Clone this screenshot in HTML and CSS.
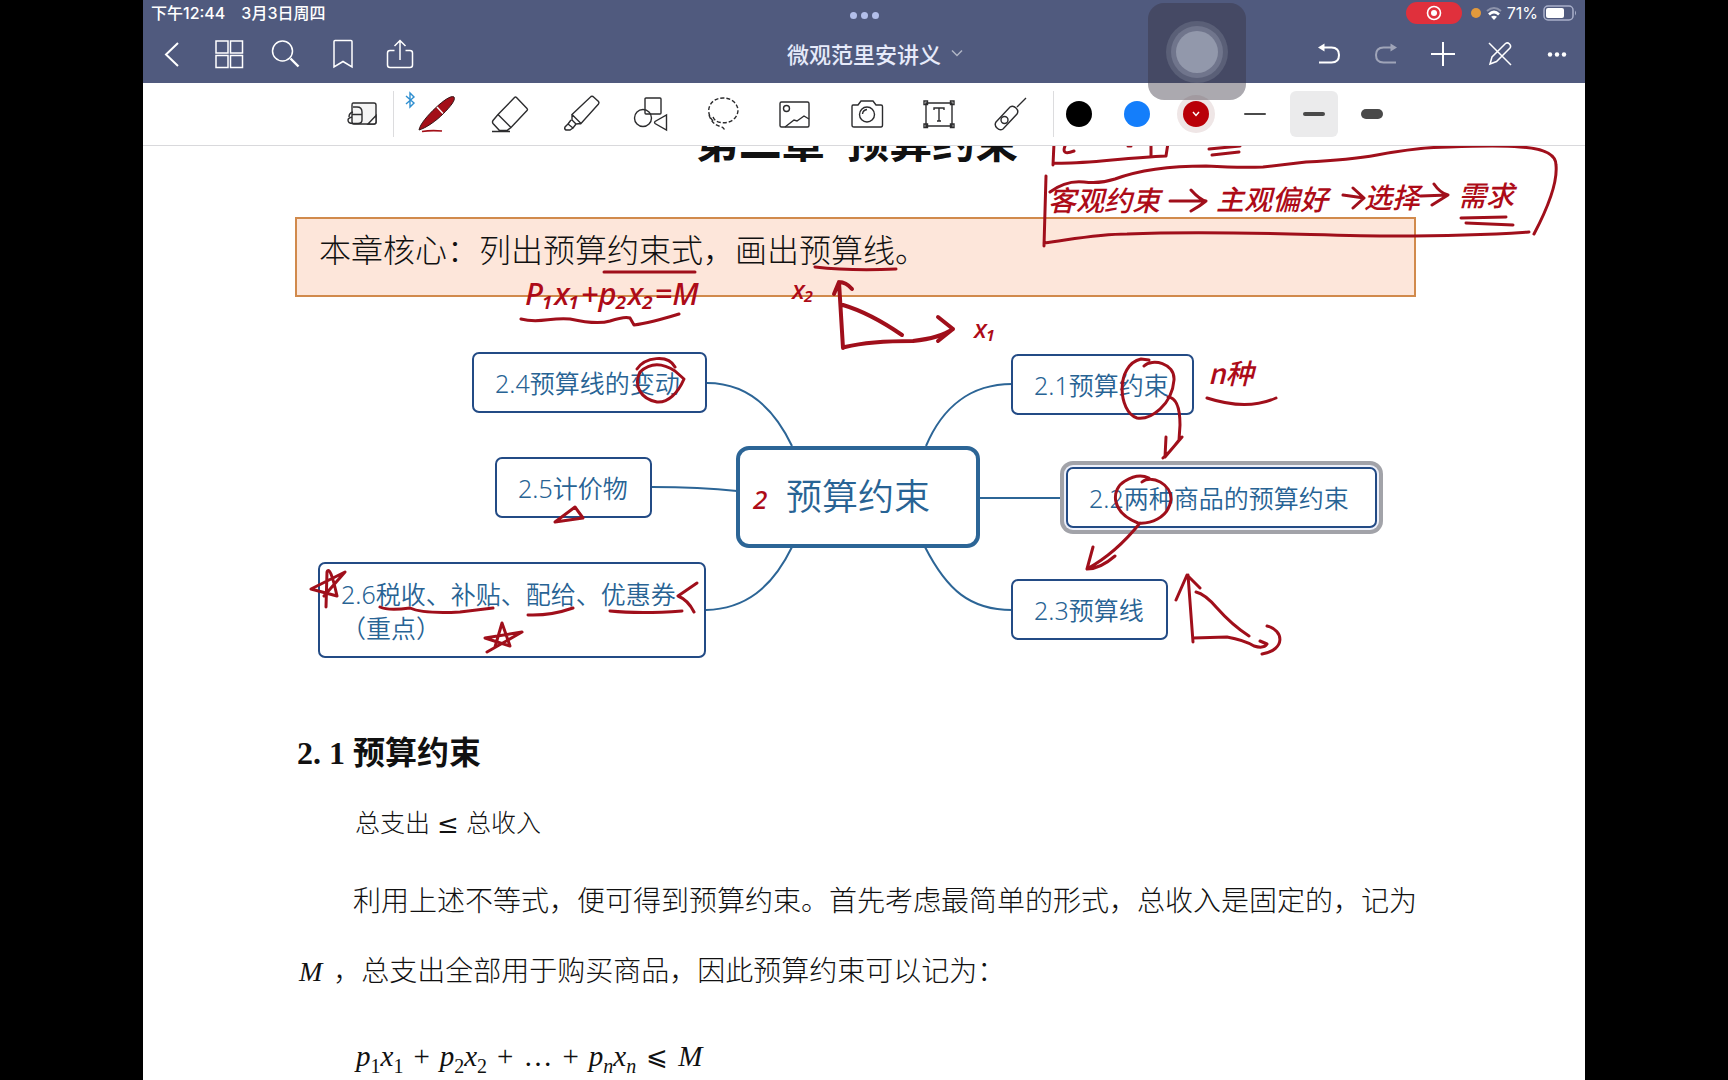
FILE: index.html
```html
<!DOCTYPE html>
<html lang="zh-CN">
<head>
<meta charset="utf-8">
<meta name="viewport" content="width=device-width, initial-scale=1">
<title>微观范里安讲义</title>
<link rel="stylesheet" href="styles.css">
</head>
<body>
<div class="app">
  <header class="header">
    <div class="status">
      <div class="status-left"><span>下午12:44</span><span>3月3日周四</span></div>
      <div class="multitask"><i></i><i></i><i></i></div>
      <div class="status-right">
        <span class="record"><svg width="16" height="16" viewBox="0 0 16 16"><circle cx="8" cy="8" r="6.5" fill="none" stroke="#fff" stroke-width="1.6"/><circle cx="8" cy="8" r="3" fill="#fff"/></svg></span>
        <span class="mic-dot"></span>
        <svg width="16" height="14" viewBox="0 0 16 14" fill="none" stroke="#fff" stroke-width="2"><path d="M1 5Q8-1 15 5" opacity=".35"/><path d="M3 8.500Q8 3.500 13 8.500" stroke-width="2.600"/><path d="M8 14L5 10.800Q8 8.700 11 10.800Z" fill="#fff" stroke="none"/></svg>
        <span>71%</span>
        <svg width="34" height="16" viewBox="0 0 34 16"><rect x="1" y="1" width="29" height="14" rx="4" fill="none" stroke="#a9b0ca" stroke-width="1.5"/><rect x="3" y="3" width="18" height="10" rx="2" fill="#fff"/><path d="M32 5.500Q34 8 32 10.500Z" fill="#a9b0ca"/></svg>
      </div>
    </div>
    <nav class="nav">
      <div class="nav-group">
        <button aria-label="返回"><svg width="30" height="30" viewBox="0 0 30 30"><path d="M21 4L9 15.500L21 27" stroke-width="2"/></svg></button>
        <button aria-label="缩略图"><svg width="30" height="30" viewBox="0 0 30 30"><path d="M2 2h12v12H2zM16.500 2h12v12h-12zM2 16.500h12v12H2zM16.500 16.500h12v12h-12z"/></svg></button>
        <button aria-label="搜索"><svg width="30" height="30" viewBox="0 0 30 30"><circle cx="11.500" cy="12" r="10"/><path d="M19.500 19.500l8 8" stroke-width="2.400"/></svg></button>
        <button aria-label="书签"><svg width="30" height="30" viewBox="0 0 30 30"><path d="M6 2.500Q6 1.500 7 1.500H23Q24 1.500 24 2.500V28L15 22.500L6 28Z"/></svg></button>
        <button aria-label="分享"><svg width="30" height="30" viewBox="0 0 30 30"><path d="M9.500 11.500H5Q2.500 11.500 2.500 14V26Q2.500 28.500 5 28.500H25Q27.500 28.500 27.500 26V14Q27.500 11.500 25 11.500H20.500M15 21V2M9.500 7L15 1.500L20.500 7"/></svg></button>
      </div>
      <button class="doc-title">微观范里安讲义<svg width="12" height="8" viewBox="0 0 12 8"><path d="M1 1.500L6 6.500L11 1.500" opacity=".55"/></svg></button>
      <div class="nav-group nav-right">
        <button aria-label="撤销"><svg width="26" height="26" viewBox="0 0 26 26"><path d="M6 6.500H15.500Q23 6.500 23 14Q23 21.500 15.500 21.500H3" stroke-width="2"/><path d="M2 6.500L8.500 2.500V10.500Z" fill="#fff" stroke="none"/></svg></button>
        <button aria-label="重做" disabled><svg width="26" height="26" viewBox="0 0 26 26"><path d="M20 6.500H10.500Q3 6.500 3 14Q3 21.500 10.500 21.500H23" stroke-width="2"/><path d="M24 6.500L17.500 2.500V10.500Z" fill="#fff" stroke="none"/></svg></button>
        <button aria-label="添加"><svg width="26" height="26" viewBox="0 0 26 26"><path d="M13 1V25M1 13H25" stroke-width="2"/></svg></button>
        <button aria-label="只读模式"><svg width="26" height="26" viewBox="0 0 26 26"><path d="M2 2L24 24M3 23L5 16L18.500 2.500Q20.500 1 22.500 3Q24.500 5 23 7L9.500 20.500Z"/></svg></button>
        <button aria-label="更多"><svg width="26" height="26" viewBox="0 0 26 26"><g fill="#fff" stroke="none"><circle cx="6" cy="13.500" r="2.200"/><circle cx="13" cy="13.500" r="2.200"/><circle cx="20" cy="13.500" r="2.200"/></g></svg></button>
      </div>
    </nav>
  </header>

  <div class="toolbar" role="toolbar">
    <div class="tools">
      <button aria-label="放大窗口"><svg width="36" height="36" viewBox="0 0 36 36"><path d="M8 7H29Q31 7 31 9V26Q31 28 29 28H9Q7 28 7 26V9Q7 7 8 7Z" fill="#f4f4f4"/><path d="M23 28L31 19.500V26Q31 28 29 28Z" fill="#fff"/><path d="M8 11H12Q17 11 17 16V24Q17 27.500 13 27.500H8Q3 27.500 3 24Q3 22 7 21M7 18.500H17M8 16Q4 17 4 21"/></svg></button>
      <button aria-label="钢笔" class="pen"><svg class="bt" width="12" height="18" viewBox="0 0 12 18"><path d="M2 5L10 12L6 16V2L10 6L2 13"/></svg><svg width="44" height="40" viewBox="0 0 44 40"><path d="M4 36C5 30 13 21 21 13.500C28 7 36 1 39 3C41 6 35 13 28 20C21 27 11 34 4 36Z" fill="#a30f18" stroke="#35181a" stroke-width="1"/><path d="M22 13L28 19.500" stroke="#fff"/><path d="M7 37.500Q16 36 27 37" stroke="#a30f18" stroke-width="1.600"/></svg></button>
      <button class="nudged" aria-label="橡皮擦"><svg width="40" height="40" viewBox="0 0 40 40"><path d="M26.500 3.500L37 14.500Q38 15.500 37 16.500L21 33.500L8 20.500L24.500 3.500Q25.500 2.500 26.500 3.500ZM8 20.500L3 26.500Q2 28 3 29.500L9.500 36.500L17 36.500L21 33.500M2 37.500H20"/></svg></button>
      <button class="nudged" aria-label="荧光笔"><svg width="40" height="40" viewBox="0 0 40 40"><path d="M31 2.500L36.500 7.500Q37.500 9 36.500 10L19 29.500L10 20.500L29 2.500Q30 2 31 2.500ZM10 20.500L10 26L14 30L19 29.500M9 26L6 30L11 34L14 30M6 30L3 33Q2 35 4 36L8 36L11 34"/></svg></button>
      <button aria-label="形状"><svg width="36" height="36" viewBox="0 0 36 36"><rect x="12" y="2" width="16" height="16" rx="1"/><circle cx="10" cy="22" r="8.500"/><path d="M33.500 19V34L22 27.500Q21 26.500 22 25.500Z"/></svg></button>
      <button aria-label="套索"><svg width="36" height="36" viewBox="0 0 36 36"><path d="M8 25C-1 15 5 2 18 2C31 2 37 14 30 22C23 30 8 27 8 20M4 19Q7 28 14 30Q19 31 20 35" stroke-dasharray="4 2"/></svg></button>
      <button aria-label="图片"><svg width="36" height="36" viewBox="0 0 36 36"><rect x="3" y="6" width="29" height="25" rx="1.500"/><circle cx="9.500" cy="12.500" r="3"/><path d="M8 31L17 24L20 25L27 20L32 23"/></svg></button>
      <button aria-label="相机"><svg width="36" height="36" viewBox="0 0 36 36"><path d="M4 9H9L12 5H24L27 9H32Q33.500 9 33.500 10.500V29Q33.500 31 32 31H5Q3 31 3 29V10.500Q3 9 4 9Z"/><circle cx="18" cy="18.500" r="7.500"/><path d="M13.500 18Q14 14 18 13.500"/></svg></button>
      <button aria-label="文本"><svg width="36" height="36" viewBox="0 0 36 36"><path d="M5 7H31V30H5ZM3 5h3.500v3.500H3zM29.500 5H33v3.500h-3.500zM3 28h3.500v3.500H3zM29.500 28H33v3.500h-3.500zM13 14V12H23V14M18 12V25M16 25h4"/></svg></button>
      <button aria-label="激光笔"><svg width="36" height="36" viewBox="0 0 36 36"><path d="M3 26L17 11Q20 9 23 12Q26 15 24 18L10 33Q7 35 4 32Q1 29 3 26ZM24 11L33 2"/><circle cx="11.500" cy="24" r="3.500"/></svg></button>
    </div>
    <div class="presets">
      <button aria-label="黑色"><span class="dot black"></span></button>
      <button aria-label="蓝色"><span class="dot blue"></span></button>
      <button aria-label="红色"><span class="dot red"><svg width="8" height="6" viewBox="0 0 8 6"><path d="M1 1L4 4.500L7 1" stroke="#fff"/></svg></span></button>
      <button aria-label="细"><span class="line thin"></span></button>
      <button aria-label="中" class="selected"><span class="line mid"></span></button>
      <button aria-label="粗"><span class="line thick"></span></button>
    </div>
  </div>

  <main class="document">
    <h1 class="chapter">第二章&nbsp; 预算约束</h1>
    <p class="core">本章核心：列出预算约束式，画出预算线。</p>

    <section class="mindmap">
      <svg class="links" width="1120" height="380" viewBox="295 297 1120 380">
        <path d="M707 383C745 383 773 406 792 446M652 487Q700 487 737 491M706 610C745 609 772 588 792 547M926 446C942 408 970 384 1012 384M979 498H1060M925 547C947 590 970 610 1012 610"/>
      </svg>
      <div class="node root">预算约束</div>
      <div class="node n24">2.4预算线的变动</div>
      <div class="node n25">2.5计价物</div>
      <div class="node n26">2.6税收、补贴、配给、优惠券<br>（重点）</div>
      <div class="node n21">2.1预算约束</div>
      <div class="node n22">2.2两种商品的预算约束</div>
      <div class="node n23">2.3预算线</div>
    </section>

    <h2 class="section-title">2. 1 预算约束</h2>
    <p class="inequality"><span>总支出</span><span class="leq">≤</span><span>总收入</span></p>
    <p class="body-text">利用上述不等式，便可得到预算约束。首先考虑最简单的形式，总收入是固定的，记为 <i>M</i> ，总支出全部用于购买商品，因此预算约束可以记为：</p>
    <p class="formula"><span><i>p</i><sub>1</sub><i>x</i><sub>1</sub></span><span>+</span><span><i>p</i><sub>2</sub><i>x</i><sub>2</sub></span><span>+</span><span>…</span><span>+</span><span><i>p</i><sub><i>n</i></sub><i>x</i><sub><i>n</i></sub></span><span class="leq">⩽</span><i>M</i></p>

    <svg class="ink" width="1442" height="934" viewBox="143 146 1442 934">
      <g class="strokes">
        <path d="M1054 143L1053 165M1053 163C1080 165 1120 158 1166 156L1168 143M1151 143V156M1065 146Q1061 156 1074 151M1128 146L1131 146M1209 149L1240 146M1212 155L1239 152"/>
        <path d="M1046 176L1044 246M1044 243C1080 238 1100 234 1127 234C1230 230 1320 236 1395 236Q1470 236 1529 232M1050 192Q1066 180 1084 182Q1100 184 1115 179Q1150 166 1206 166Q1240 168 1263 167L1306 162Q1350 160 1377 155Q1420 147 1449 147Q1500 145 1520 147Q1556 149 1556 165C1558 185 1544 215 1534 234"/>
        <path d="M1170 201H1206M1191 190Q1200 200 1206 201Q1200 206 1191 211M1343 195L1364 198M1353 188L1364 198L1353 208M1421 196L1448 195M1434 184Q1440 193 1448 195Q1440 200 1432 205M1461 218L1506 217M1466 223L1513 225"/>
        <path d="M604 272H695M815 267Q850 271 896 269M521 319C540 324 550 317 570 319Q597 325 610 321Q625 316 630 318L634 325Q650 323 679 314"/>
        <path d="M839 282L843 348M834 294L839 282Q846 282 852 289M843 305Q870 313 902 335M845 347Q870 341 913 341Q940 338 953 329M938 317L953 329L938 341" stroke-width="4"/>
        <path d="M637 369C645 357 668 354 675 367M640 372Q655 358 675 371L684 379C678 393 668 403 657 402C641 399 633 386 640 372M555 522L575 507L583 518Z"/>
        <path d="M326 607L327 572Q330 564 337 596L311 589L345 572L324 596M487 652L522 632L485 638L510 646L502 623L495 647M380 607Q388 611 410 608Q423 614 460 612L493 608M528 615Q550 616 573 608M610 611Q640 614 682 611M697 583L678 596Q688 600 694 612"/>
        <path d="M1144 366C1152 358 1175 363 1174 380C1172 405 1151 420 1137 418C1118 412 1115 365 1141 359L1149 360M1168 397Q1180 398 1180 425L1179 440Q1172 450 1163 458M1166 437L1165 457L1182 437M1207 398Q1247 411 1276 398"/>
        <path d="M1142 482C1151 474 1172 484 1171 500C1168 519 1149 524 1138 523C1110 512 1111 489 1125 481Q1138 473 1149 478M1140 523Q1116 553 1087 569M1093 547L1087 569Q1100 569 1115 556"/>
        <path d="M1188 575L1193 642M1176 600L1187 575L1200 588M1196 592Q1205 594 1217 608Q1232 625 1249 636M1193 638L1227 637Q1244 640 1254 646Q1264 649 1267 644L1260 641M1267 626C1284 630 1286 650 1262 654"/>
      </g>
      <g class="handwriting">
        <text x="1048" y="211">客观约束</text>
        <text x="1216" y="210">主观偏好</text>
        <text x="1364" y="208">选择</text>
        <text x="1458" y="206">需求</text>
        <text class="latin wide" x="525" y="305">P₁x₁+p₂x₂=M</text>
        <text class="latin" x="792" y="299">x₂</text>
        <text class="latin" x="974" y="338">x₁</text>
        <text class="latin" x="753" y="509">2</text>
        <text x="1208" y="384">n种</text>
      </g>
    </svg>
  </main>

  <button class="assistive" aria-label="辅助触控"><span></span></button>
</div>
</body>
</html>
```
FILE: styles.css
```css
* { box-sizing: border-box; }

body {
  margin: 0;
  background: #000;
  color: #111;
  font-family: "Inter", "Noto Sans CJK SC", sans-serif;
}

button {
  padding: 0;
  border: 0;
  background: none;
  color: inherit;
  font: inherit;
}

svg { fill: none; }

.app {
  position: relative;
  max-width: 1442px;
  min-height: 100vh;
  margin: 0 auto;
  display: flex;
  flex-direction: column;
  background: #fff;
}

/* Header */
.header {
  background: #505a7e;
  color: #fff;
}

.status {
  display: grid;
  grid-template-columns: 1fr auto 1fr;
  align-items: center;
  height: 25px;
  padding: 0 8px;
  font-size: 16px;
  font-weight: 500;
  line-height: 24px;
}

.status-left { display: flex; gap: 16px; }

.multitask { display: flex; gap: 4px; padding-top: 6px; }
.multitask i { width: 7px; height: 7px; border-radius: 50%; background: #b3bfea; }

.status-right {
  display: flex;
  align-items: center;
  justify-content: flex-end;
  gap: 5px;
  font-size: 16px;
  font-weight: 400;
}

.record {
  display: flex;
  align-items: center;
  justify-content: center;
  width: 56px;
  height: 22px;
  border-radius: 12px;
  background: #e0303c;
}

.mic-dot { width: 10px; height: 10px; margin-left: 4px; border-radius: 50%; background: #e39a3c; }

.nav {
  display: grid;
  grid-template-columns: 1fr auto 1fr;
  align-items: center;
  height: 58px;
}

.nav svg { stroke: #fff; stroke-width: 1.5; }
.nav-group { display: flex; }
.nav-group button {
  display: flex;
  align-items: center;
  justify-content: center;
  width: 57px;
  height: 58px;
}
.nav-right { justify-content: flex-end; }
.nav-group button:disabled { opacity: .45; }

.doc-title {
  display: flex;
  align-items: center;
  gap: 10px;
  padding-left: 22px;
  padding-bottom: 2px;
  color: #e6eafa;
  font-size: 22px;
  font-weight: 500;
}

/* Toolbar */
.toolbar {
  display: flex;
  justify-content: center;
  gap: 2px;
  height: 63px;
  border-bottom: 1px solid #d9d9dc;
}

.tools, .presets { display: flex; align-items: center; }
.tools svg, .presets svg { stroke: #2c2c2e; stroke-width: 1.4; }

.tools button {
  display: flex;
  align-items: center;
  justify-content: center;
  width: 72px;
  height: 46px;
}

.tools .pen {
  position: relative;
  width: 78px;
  margin-left: -6px;
  padding-left: 10px;
  border-left: 1px solid #dcdcde;
}

.tools .nudged { padding-left: 6px; }

.tools .bt { position: absolute; left: 10px; top: 0; stroke: #2f8fd0; }

.presets button {
  display: flex;
  align-items: center;
  justify-content: center;
  width: 59px;
  height: 46px;
}
.presets button:first-child {
  width: 55px;
  margin-left: 4px;
  padding-right: 4px;
  border-left: 1px solid #dcdcde;
}
.presets .selected {
  width: 48px;
  margin: 0 5px;
  border-radius: 6px;
  background: #ebebec;
}

.dot { width: 26px; height: 26px; border-radius: 50%; }
.black { background: #000; }
.blue { background: #147efb; }
.red {
  display: flex;
  align-items: center;
  justify-content: center;
  background: #b90008;
  box-shadow: 0 0 0 6px #efe6e6;
}

.line { width: 22px; border-radius: 5px; background: #4a4a4a; }
.thin { height: 2px; }
.mid { height: 4px; }
.thick { height: 10px; }

/* Document page */
.document {
  position: relative;
  flex: 1;
  height: 934px;
  padding: 0 166px 0 152px;
  overflow: hidden;
  font-family: "Liberation Serif", "Noto Sans CJK SC", serif;
}

.chapter {
  height: 71px;
  margin: -32px 0 32px;
  font-size: 43px;
  line-height: 60px;
  text-align: center;
}

.core {
  height: 80px;
  margin: 0 3px 0 0;
  padding: 0 22px;
  border: 2px solid #d18a4c;
  background: #fde6da;
  font-size: 32px;
  font-weight: 300;
  line-height: 64px;
}

/* Mind map */
.mindmap { position: relative; height: 412px; }

.links { position: absolute; left: 0; top: 0; stroke: #2c6596; stroke-width: 2; }

.node {
  position: absolute;
  display: flex;
  align-items: center;
  height: 61px;
  padding: 0 21px;
  border: 2px solid #234b85;
  border-radius: 7px;
  background: #fff;
  color: #286394;
  font-family: "Noto Sans", "Noto Sans CJK SC", sans-serif;
  font-size: 25px;
  font-weight: 350;
  line-height: 34px;
  white-space: nowrap;
}

.root {
  left: 441px;
  top: 149px;
  width: 244px;
  height: 102px;
  justify-content: center;
  border: 4px solid #2c6596;
  border-radius: 13px;
  font-size: 36px;
}

.n24 { left: 177px; top: 55px; width: 235px; }
.n25 { left: 200px; top: 160px; width: 157px; }
.n26 { left: 23px; top: 265px; width: 388px; height: 96px; display: block; padding-top: 13px; }
.n21 { left: 716px; top: 57px; width: 183px; }
.n22 { left: 771px; top: 170px; width: 311px; box-shadow: 0 0 0 2px #eef1fb, 0 0 0 6px #a2a3a9; }
.n23 { left: 716px; top: 282px; width: 157px; }

/* Body */
.section-title {
  margin: 0;
  padding-left: 2px;
  font-size: 32px;
  line-height: 88px;
}

.inequality {
  display: flex;
  gap: 7px;
  margin: 0;
  padding-left: 60px;
  font-size: 25px;
  font-weight: 300;
  line-height: 54px;
}
.inequality .leq { width: 22px; }

.body-text {
  margin: 16px 0 0;
  font-size: 28px;
  font-weight: 300;
  line-height: 70px;
  text-indent: 58px;
}
.body-text i { margin: 0 4px; }

.formula {
  display: flex;
  gap: 10px;
  margin: 14px 0 0;
  padding-left: 61px;
  font-size: 29px;
  line-height: 70px;
}
.formula sub { font-size: 20px; line-height: 0; }
.leq { font-family: "DejaVu Serif", serif; font-size: 26px; }

/* Handwritten annotations over the page */
.ink { position: absolute; left: 0; top: 0; pointer-events: none; }
.strokes { stroke: #a00f1b; stroke-width: 3; stroke-linecap: round; stroke-linejoin: round; }
.handwriting {
  fill: #ad0b18;
  font-family: "Noto Sans CJK SC", sans-serif;
  font-size: 28px;
  font-style: italic;
  font-weight: 500;
}
.latin { font-family: "Noto Sans", "DejaVu Sans", sans-serif; font-size: 26px; }
.wide { font-size: 31px; }

/* Floating system control */
.assistive {
  position: absolute;
  left: 1005px;
  top: 3px;
  display: flex;
  align-items: center;
  justify-content: center;
  width: 98px;
  height: 97px;
  border-radius: 16px;
  background: rgba(55, 50, 65, .42);
}
.assistive span {
  width: 42px;
  height: 42px;
  border-radius: 50%;
  background: #9298ab;
  box-shadow: 0 0 0 5px #70758c, 0 0 0 10px #5a5f77;
}
```
